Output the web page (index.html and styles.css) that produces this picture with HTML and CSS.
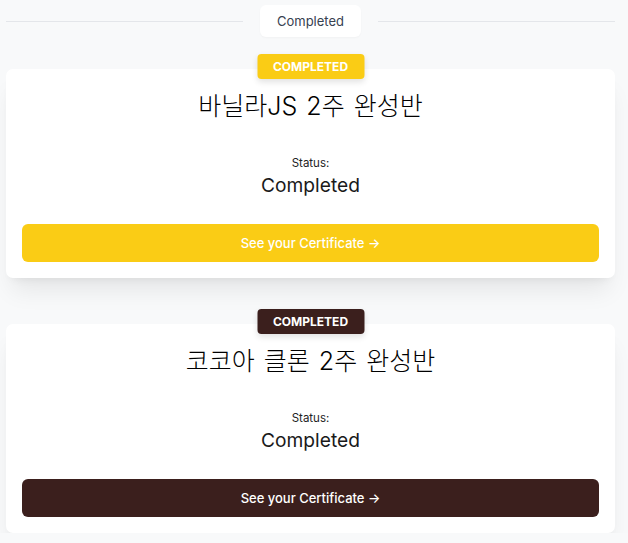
FILE: index.html
```html
<!DOCTYPE html>
<html lang="ko">
<head>
<meta charset="utf-8">
<link rel="stylesheet" href="styles.css">
</head>
<body>
<main class="page">
  <div class="divider">
    <span class="divider-line"></span>
    <span class="divider-pill">Completed</span>
    <span class="divider-line"></span>
  </div>
  <section class="course-list">
    <article class="course-card course-card--yellow">
      <span class="badge">COMPLETED</span>
      <h2 class="course-title">바닐라JS 2주 완성반</h2>
      <div class="status">
        <span class="status-label">Status:</span>
        <span class="status-value">Completed</span>
      </div>
      <a class="cert-btn" href="#">See your Certificate →</a>
    </article>
    <article class="course-card course-card--brown">
      <span class="badge">COMPLETED</span>
      <h2 class="course-title">코코아 클론 2주 완성반</h2>
      <div class="status">
        <span class="status-label">Status:</span>
        <span class="status-value">Completed</span>
      </div>
      <a class="cert-btn" href="#">See your Certificate →</a>
    </article>
  </section>
</main>
</body>
</html>
```
FILE: styles.css
```css
* { box-sizing: border-box; }
html, body { margin: 0; padding: 0; }
body {
  background: #f8f9fa;
  font-family: Inter, "Noto Sans CJK KR", sans-serif;
  color: #111;
}
.page {
  padding: 5px 13px 0 6px;
}
.divider {
  display: flex;
  align-items: center;
  gap: 17px;
}
.divider-line {
  flex: 1;
  height: 1px;
  background: #e4e6ea;
}
.divider-pill {
  background: #fff;
  border-radius: 6px;
  height: 32px;
  padding: 0 17px;
  display: flex;
  align-items: center;
  font-size: 13px;
  color: #374151;
  box-shadow: 0 1px 2px rgba(0,0,0,0.03);
}
.course-list {
  display: flex;
  flex-direction: column;
  gap: 46px;
  margin-top: 32px;
}
.course-card {
  position: relative;
  background: #fff;
  border-radius: 7px;
  padding: 19px 16px 16px;
  display: flex;
  flex-direction: column;
  align-items: center;
  box-shadow: 0 18px 25px -6px rgba(0,0,0,0.08), 0 6px 10px -6px rgba(0,0,0,0.08);
}
.badge {
  position: absolute;
  top: -15px;
  left: 50%;
  transform: translateX(-50%);
  width: 107px;
  height: 25px;
  border-radius: 4px;
  display: flex;
  align-items: center;
  justify-content: center;
  font-size: 12px;
  font-weight: 700;
  color: #fff;
  box-shadow: 0 3px 6px rgba(0,0,0,0.12);
}
.course-title {
  margin: 0 0 31px;
  font-size: 25px;
  font-weight: 300;
  line-height: 36px;
  word-spacing: 2px;
  color: #000;
  font-family: Inter, "Noto Sans CJK KR", sans-serif;
}
.status {
  display: flex;
  flex-direction: column;
  align-items: center;
  margin-bottom: 25px;
}
.status-label {
  font-size: 11.5px;
  line-height: 16px;
  color: #222;
}
.status-value {
  font-size: 19.2px;
  line-height: 28px;
  font-weight: 400;
  color: #1a1a1a;
}
.cert-btn {
  align-self: stretch;
  height: 38px;
  border-radius: 6px;
  display: flex;
  align-items: center;
  justify-content: center;
  color: #fff;
  font-size: 13px;
  font-weight: 500;
  text-decoration: none;
}
.course-card--yellow .badge,
.course-card--yellow .cert-btn { background: #facc15; }
.course-card--brown .badge,
.course-card--brown .cert-btn { background: #3b1f1d; }
```
